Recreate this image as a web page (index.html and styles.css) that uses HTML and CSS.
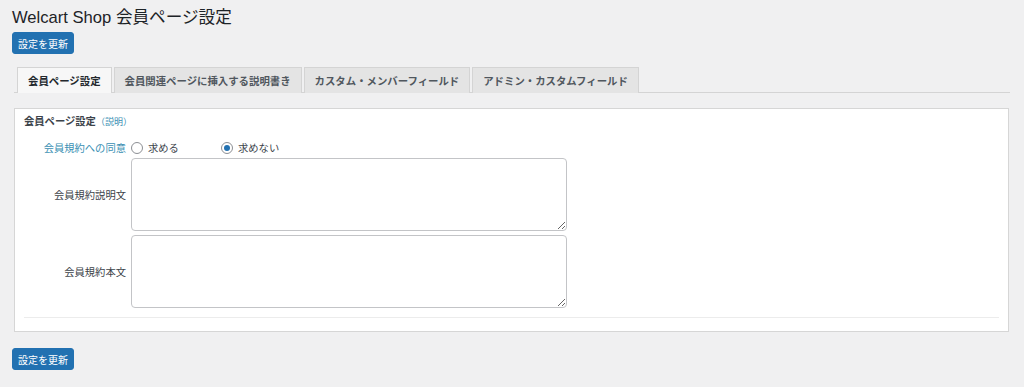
FILE: index.html
```html
<!DOCTYPE html>
<html lang="ja">
<head>
    <meta charset="UTF-8">
    <title>Welcart Shop 会員ページ設定</title>
    <link rel="stylesheet" href="styles.css">
</head>
<body>
    <div class="wrap">
        <h1 class="page-title">Welcart Shop 会員ページ設定</h1>
        <button type="button" class="button-primary">設定を更新</button>

        <ul class="tabs">
            <li class="tab active">会員ページ設定</li>
            <li class="tab">会員関連ページに挿入する説明書き</li>
            <li class="tab">カスタム・メンバーフィールド</li>
            <li class="tab">アドミン・カスタムフィールド</li>
        </ul>

        <div class="postbox">
            <h3 class="box-title">会員ページ設定<span class="explain">（説明）</span></h3>

            <div class="form-row radio-row">
                <div class="form-label link">会員規約への同意</div>
                <div class="form-field radios">
                    <label class="radio"><span class="radio-dot"></span>求める</label>
                    <label class="radio"><span class="radio-dot checked"></span>求めない</label>
                </div>
            </div>

            <div class="form-row text-row">
                <div class="form-label">会員規約説明文</div>
                <div class="form-field"><textarea class="textarea"></textarea></div>
            </div>

            <div class="form-row text-row">
                <div class="form-label">会員規約本文</div>
                <div class="form-field"><textarea class="textarea"></textarea></div>
            </div>

            <hr class="divider">
        </div>

        <button type="button" class="button-primary bottom">設定を更新</button>
    </div>
</body>
</html>
```

FILE: styles.css
```css
:root {
    --bg-page: #f0f0f1;
    --text-main: #1d2327;
    --text-sub: #3c434a;
    --border: #d6d6d6;
    --accent: #2271b1;
    --link: #3a8fb3;
}

* {
    margin: 0;
    padding: 0;
    box-sizing: border-box;
}

body {
    font-family: "Liberation Sans", "Noto Sans CJK JP", sans-serif;
    background-color: var(--bg-page);
    color: var(--text-main);
    font-size: 10.3px;
}

.wrap {
    padding: 7px 14px 0 12px;
}

.page-title {
    font-size: 16.6px;
    font-weight: 400;
    line-height: 22px;
    margin: 0 0 3px;
    color: var(--text-main);
}

.button-primary {
    display: block;
    width: 62px;
    height: 22px;
    font-family: inherit;
    font-size: 10px;
    color: #fff;
    background-color: var(--accent);
    border: 1px solid var(--accent);
    border-radius: 3px;
    cursor: pointer;
}

.button-primary.bottom {
    margin-top: 16px;
}

.tabs {
    list-style: none;
    display: flex;
    gap: 2px;
    margin: 13px 0 0 2px;
    padding-left: 3px;
    border-bottom: 1px solid #d4d4d4;
}

.tab {
    height: 26px;
    margin-bottom: -1px;
    padding: 0 10px;
    display: flex;
    align-items: center;
    font-size: 10.4px;
    font-weight: 700;
    color: #50575e;
    background-color: #e4e4e4;
    border: 1px solid #d4d4d4;
    border-bottom: none;
}

.tab.active {
    background-color: #f7f7f7;
    color: #23282d;
}

.postbox {
    margin: 15px 1px 0 2px;
    padding: 6px 9px 13px;
    background-color: #fff;
    border: 1px solid var(--border);
}

.box-title {
    font-size: 10.3px;
    font-weight: 700;
    color: #3c434a;
    line-height: 14px;
}

.explain {
    font-size: 9px;
    font-weight: 400;
    color: var(--link);
}

.form-row {
    display: flex;
    align-items: center;
}

.radio-row {
    margin-top: 11px;
}

.radio-row + .text-row {
    margin-top: 3px;
}

.text-row + .text-row {
    margin-top: 4px;
}

.form-label {
    width: 107px;
    text-align: right;
    padding-right: 5px;
    color: var(--text-sub);
    font-size: 10.3px;
}

.form-label.link {
    color: var(--link);
}

.radios {
    display: flex;
    height: 14px;
    align-items: center;
}

.radio {
    display: flex;
    align-items: center;
    gap: 5px;
    width: 90px;
    font-size: 10.3px;
    color: var(--text-sub);
}

.radio-dot {
    width: 12px;
    height: 12px;
    border: 1px solid #8c8f94;
    border-radius: 50%;
    background-color: #fff;
    position: relative;
}

.radio-dot.checked::after {
    content: "";
    position: absolute;
    top: 2px;
    left: 2px;
    width: 6px;
    height: 6px;
    border-radius: 50%;
    background-color: var(--accent);
}

.textarea {
    display: block;
    width: 436px;
    height: 73px;
    border: 1px solid #c3c4c7;
    border-radius: 4px;
    background-color: #fff;
    resize: vertical;
}

.divider {
    border: none;
    border-top: 1px solid #ececec;
    margin-top: 9px;
}
```
